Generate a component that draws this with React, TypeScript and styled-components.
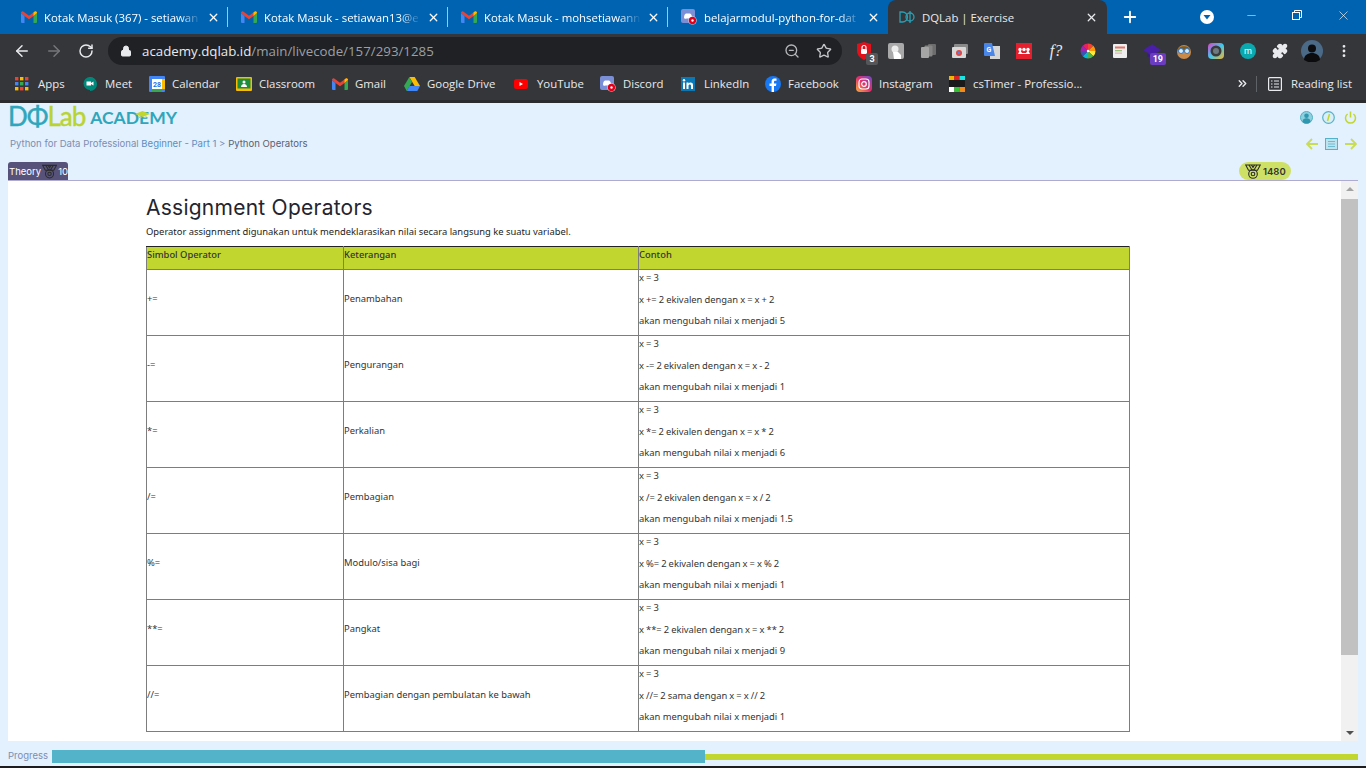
import React from 'react';
import styled, { createGlobalStyle } from 'styled-components';
import { Puzzle, Star, ZoomOut, Lock, ArrowLeft, ArrowRight, RotateCw, Plus, X, Minus, MoreVertical, ChevronsRight } from 'lucide-react';

const GlobalStyle = createGlobalStyle`
  html, body {
    margin: 0;
    padding: 0;
    width: 1366px;
    height: 768px;
    overflow: hidden;
    background: #1d1d1f;
  }
  * { box-sizing: border-box; }
`;

const GmailIcon = () => (
  <svg width="16" height="12" viewBox="0 0 16 12">
    <path d="M0 2v9a1 1 0 0 0 1 1h2.500V5z" fill="#4285f4" />
    <path d="M16 2v9a1 1 0 0 1-1 1h-2.500V5z" fill="#34a853" />
    <path d="M0 2l3.500 3L8 8.200 12.500 5 16 2a1.600 1.600 0 0 0-2.600-1.300L8 4.700 2.600.7A1.600 1.600 0 0 0 0 2z" fill="#ea4335" />
    <path d="M12.500 5V1.500l.9-.8A1.600 1.600 0 0 1 16 2z" fill="#fbbc04" />
  </svg>
);

const DiscordIcon = () => (
  <svg width="16" height="16" viewBox="0 0 16 16">
    <rect width="14" height="14" rx="2" fill="#7b8fd6" />
    <path d="M3 9c0-3 1-4 2-4.500h4c1 .5 2 1.500 2 4.500-1 1-2 1-2.500.5h-3C5 10 4 10 3 9z" fill="#fff" />
    <circle cx="11.500" cy="11.500" r="4" fill="#fff" />
    <circle cx="11.500" cy="11.500" r="3.700" fill="#e1001a" />
    <circle cx="11.500" cy="11.500" r="1.200" fill="#fff" />
  </svg>
);

const DqlabMark = () => (
  <svg width="16" height="12" viewBox="0 0 16 12" fill="none" stroke="#2a9fb3" strokeWidth="1.300">
    <path d="M1 1h2.500a5 5 0 0 1 0 10H1z" />
    <circle cx="11" cy="6" r="4" />
    <path d="M11 0v12" />
  </svg>
);

const MedalIcon = () => (
  <svg width="16" height="15" viewBox="0 0 16 15" fill="none" stroke="#2b2b2b" strokeWidth="1.100">
    <path d="M.7 1h14.600l-2.800 5.200h-9z" />
    <path d="M4 1l3 5M12 1L9 6M6.500 1L8 3.500 9.500 1" />
    <circle cx="8" cy="10" r="4.300" />
    <circle cx="8" cy="10" r="1.800" />
  </svg>
);

const AppsIcon = () => (
  <svg width="14" height="14" viewBox="0 0 14 14">
    {[0, 5, 10].map((y, r) =>
      [0, 5, 10].map((x, c) => (
        <rect key={`${r}${c}`} x={x} y={y} width="3.400" height="3.400" fill={['#ea4335', '#4285f4', '#fbbc04', '#34a853'][(r + c * 2) % 4]} />
      )),
    )}
  </svg>
);

const MeetIcon = () => (
  <svg width="16" height="16" viewBox="0 0 16 16">
    <path d="M8 1a7 7 0 0 1 0 14v-1.500A7 7 0 0 1 8 1z" fill="#00897b" />
    <circle cx="8" cy="7.500" r="6.500" fill="#00897b" />
    <rect x="4.500" y="5.500" width="4.500" height="4" fill="#fff" />
    <path d="M9 7l2.500-1.500v4L9 8z" fill="#fff" />
  </svg>
);

const CalendarIcon = () => (
  <svg width="16" height="16" viewBox="0 0 16 16">
    <rect width="16" height="16" rx="1" fill="#4285f4" />
    <rect x="3" y="3" width="10" height="10" fill="#fff" />
    <rect x="13" y="3" width="3" height="10" fill="#fbbc04" />
    <rect x="3" y="13" width="10" height="3" fill="#34a853" />
    <text x="8" y="11" fontSize="7" fontWeight="700" textAnchor="middle" fill="#1a73e8" fontFamily="Roboto, sans-serif">28</text>
  </svg>
);

const ClassroomIcon = () => (
  <svg width="16" height="14" viewBox="0 0 16 14">
    <rect width="16" height="14" rx="1" fill="#f9bb04" />
    <rect x="1.500" y="1.500" width="13" height="10" fill="#1e8e3e" />
    <circle cx="8" cy="5" r="1.500" fill="#fff" />
    <path d="M5 10c0-2 1.500-3 3-3s3 1 3 3z" fill="#fff" />
  </svg>
);

const DriveIcon = () => (
  <svg width="16" height="14" viewBox="0 0 16 14">
    <path d="M5.300 0h5.400L16 9h-5.300z" fill="#fbbc04" />
    <path d="M5.300 0L0 9l2.700 5L8 5z" fill="#34a853" />
    <path d="M2.700 14h10.600L16 9H5.400z" fill="#4285f4" />
  </svg>
);

const YoutubeIcon = () => (
  <svg width="14" height="10" viewBox="0 0 14 10">
    <rect width="14" height="10" rx="2.500" fill="#f00" />
    <path d="M5.500 3v4L9 5z" fill="#fff" />
  </svg>
);

const LinkedinIcon = () => (
  <svg width="14" height="14" viewBox="0 0 14 14">
    <rect width="14" height="14" fill="#0a78b5" />
    <rect x="2" y="5.500" width="2" height="6.500" fill="#fff" />
    <circle cx="3" cy="3.300" r="1.200" fill="#fff" />
    <path d="M5.500 5.500h2v1c1-1.500 4.500-1.500 4.500 1.500v4h-2V8.500c0-1.500-2.500-1.500-2.500 0V12h-2z" fill="#fff" />
  </svg>
);

const FacebookIcon = () => (
  <svg width="16" height="16" viewBox="0 0 16 16">
    <circle cx="8" cy="8" r="8" fill="#1877f2" />
    <path d="M9 16V10h2l.4-2.500H9V6c0-.8.4-1.300 1.400-1.300h1.100V2.500C10 2.300 6.600 2 6.600 5.700v1.800H4.500V10h2.100v6z" fill="#fff" />
  </svg>
);

const InstagramIcon = () => (
  <svg width="16" height="16" viewBox="0 0 16 16">
    <defs>
      <linearGradient id="ig" x1="0" y1="1" x2="1" y2="0">
        <stop offset="0" stopColor="#fdb03a" />
        <stop offset="0.5" stopColor="#e1306c" />
        <stop offset="1" stopColor="#6a4cd0" />
      </linearGradient>
    </defs>
    <rect width="16" height="16" rx="4" fill="url(#ig)" />
    <rect x="3" y="3" width="10" height="10" rx="3" fill="none" stroke="#fff" strokeWidth="1.200" />
    <circle cx="8" cy="8" r="2.300" fill="none" stroke="#fff" strokeWidth="1.200" />
  </svg>
);

const CsTimerIcon = () => (
  <svg width="16" height="16" viewBox="0 0 16 16">
    <rect width="5.400" height="4" fill="#f5b301" />
    <rect x="5.300" width="5.400" height="4" fill="#e02020" />
    <rect x="10.600" width="5.400" height="4" fill="#19e5e5" />
    <rect y="4" width="16" height="7" fill="#1a1a1a" />
    <rect y="11" width="5.400" height="5" fill="#fff" />
    <rect x="5.300" y="11" width="5.400" height="5" fill="#33c233" />
    <rect x="10.600" y="11" width="5.400" height="5" fill="#f28a1c" />
  </svg>
);

const ReadingIcon = () => (
  <svg width="14" height="14" viewBox="0 0 14 14" fill="none" stroke="#e8eaed" strokeWidth="1.200">
    <rect x=".6" y=".6" width="12.800" height="12.800" rx="1" />
    <path d="M3 4h1.500M6 4h5M3 7h1.500M6 7h5M3 10h1.500M6 10h5" />
  </svg>
);

const ExtShield = () => (
  <svg width="16" height="18" viewBox="0 0 16 18">
    <path d="M8 0l7 2v7c0 4-3 7-7 9-4-2-7-5-7-9V2z" fill="#e0111b" />
    <rect x="5" y="7" width="6" height="5" rx="1" fill="#fff" />
    <path d="M6 7V5.500a2 2 0 0 1 4 0V7" fill="none" stroke="#fff" strokeWidth="1.200" />
  </svg>
);

const ExtTouch = () => (
  <svg width="16" height="16" viewBox="0 0 16 16">
    <rect width="16" height="16" rx="2" fill="#a9a9a9" />
    <circle cx="7" cy="6" r="3.500" fill="#ececec" />
    <path d="M5 9h5l3 3v4H6z" fill="#fff" />
  </svg>
);

const ExtCopies = () => (
  <svg width="15" height="14" viewBox="0 0 15 14">
    <rect x="7" width="8" height="11" rx="1" fill="#6d6d6d" />
    <rect x="3.500" y="1.500" width="8" height="11" rx="1" fill="#858585" />
    <rect y="3" width="8" height="11" rx="1" fill="#a5a5a5" />
  </svg>
);

const ExtWindow = () => (
  <svg width="16" height="14" viewBox="0 0 16 14">
    <rect x="2" width="14" height="10" rx="1" fill="#8a8a8a" />
    <rect y="3" width="14" height="11" rx="1" fill="#d8d8d8" />
    <circle cx="7" cy="9" r="3" fill="#e8453c" />
    <circle cx="7" cy="9" r="1.300" fill="#4285f4" />
  </svg>
);

const ExtTranslate = () => (
  <svg width="16" height="16" viewBox="0 0 16 16">
    <rect x="6" y="3" width="10" height="13" fill="#d5d5d5" />
    <path d="M0 1a1 1 0 0 1 1-1h7l3 13H1a1 1 0 0 1-1-1z" fill="#4a86e8" />
    <text x="5" y="9" fontSize="7" fontWeight="700" textAnchor="middle" fill="#fff" fontFamily="Roboto, sans-serif">G</text>
  </svg>
);

const ExtMendeley = () => (
  <svg width="16" height="16" viewBox="0 0 16 16">
    <rect width="16" height="16" fill="#e5202e" />
    <circle cx="8" cy="6.500" r="1.700" fill="#fff" />
    <circle cx="4" cy="6.500" r="1.700" fill="#fff" />
    <circle cx="12" cy="6.500" r="1.700" fill="#fff" />
    <path d="M2 11l2-4 2 3h4l2-3 2 4z" fill="#fff" />
  </svg>
);

const ExtWheel = () => (
  <svg width="16" height="16" viewBox="0 0 16 16">
    {['#f44336', '#ff9800', '#ffeb3b', '#4caf50', '#00bcd4', '#3f51b5', '#9c27b0', '#e91e63'].map((c, i) => (
      <path key={c} d="M8 8L8 0.500A7.500 7.500 0 0 1 13.300 2.700z" fill={c} transform={`rotate(${i * 45} 8 8)`} />
    ))}
    <circle cx="8" cy="8" r="1.200" fill="#fff" />
  </svg>
);

const ExtNote = () => (
  <svg width="14" height="14" viewBox="0 0 14 14">
    <rect width="14" height="14" rx="1" fill="#eeeeee" />
    <rect x="2" y="2.500" width="10" height="2" fill="#e57368" />
    <rect x="2" y="6" width="7" height="1.300" fill="#93c47d" />
    <rect x="2" y="8.500" width="7" height="1.300" fill="#e6b8af" />
  </svg>
);

const ExtCap = () => (
  <svg width="18" height="14" viewBox="0 0 16 12">
    <path d="M8 0l8 5-8 5-8-5z" fill="#4a1fa8" />
    <path d="M4 8l4 3 4-3v3H4z" fill="#3a1a88" />
  </svg>
);

const ExtFace = () => (
  <svg width="16" height="16" viewBox="0 0 16 16">
    <circle cx="8" cy="9" r="7" fill="#c98a4a" />
    <path d="M2 7c0-5 12-5 12 0z" fill="#7a5a22" />
    <circle cx="5" cy="8" r="2.500" fill="#d9efff" stroke="#2a7ad0" />
    <circle cx="11" cy="8" r="2.500" fill="#d9efff" stroke="#2a7ad0" />
  </svg>
);

const ExtCamera = () => (
  <svg width="16" height="16" viewBox="0 0 16 16">
    <defs>
      <linearGradient id="cam" x1="0" y1="0" x2="1" y2="1">
        <stop offset="0" stopColor="#e23dc8" />
        <stop offset="0.5" stopColor="#41c7ea" />
        <stop offset="1" stopColor="#f7b32b" />
      </linearGradient>
    </defs>
    <rect width="16" height="16" rx="4" fill="url(#cam)" />
    <circle cx="8" cy="8" r="5.500" fill="#3a3a3a" />
    <circle cx="8" cy="8" r="3" fill="#6d7a80" />
  </svg>
);

const ExtM = () => (
  <svg width="16" height="16" viewBox="0 0 16 16">
    <circle cx="8" cy="8" r="8" fill="#0aa9b0" />
    <text x="8" y="11" fontSize="9" textAnchor="middle" fill="#fff" fontFamily="Roboto, sans-serif">m</text>
  </svg>
);

const Avatar = () => (
  <svg width="22" height="22" viewBox="0 0 22 22">
    <circle cx="11" cy="11" r="11" fill="#4a6a88" />
    <circle cx="11" cy="8.500" r="4" fill="#0c0c0e" />
    <path d="M3 20c0-5 4-7 8-7s8 2 8 7l-4 2H7z" fill="#0c0c0e" />
  </svg>
);

const ProfileDrop = () => (
  <svg width="14" height="14" viewBox="0 0 14 14">
    <circle cx="7" cy="7" r="7" fill="#fff" />
    <path d="M3.500 5h7L7 9.500z" fill="#0063b1" />
  </svg>
);

const RestoreIcon = () => (
  <svg width="10" height="10" viewBox="0 0 10 10" fill="none" stroke="#fff" strokeWidth="1">
    <rect x=".5" y="2.500" width="7" height="7" />
    <path d="M2.500 2.500V.5h7v7h-2" />
  </svg>
);

const UserIcon = () => (
  <svg width="13" height="13" viewBox="0 0 13 13">
    <circle cx="6.500" cy="6.500" r="6" fill="#8fd0de" stroke="#4fb0c6" />
    <circle cx="6.500" cy="4.800" r="2.300" fill="#2f98b0" />
    <path d="M2.500 11c0-3 2-3.700 4-3.700s4 .7 4 3.700a6 6 0 0 1-8 0z" fill="#2f98b0" />
  </svg>
);

const InfoIcon = () => (
  <svg width="13" height="13" viewBox="0 0 13 13" fill="none">
    <circle cx="6.500" cy="6.500" r="5.800" stroke="#53b3c8" strokeWidth="1.200" fill="#d9eef6" />
    <path d="M7.500 3L5.500 10" stroke="#c1d72f" strokeWidth="1.500" />
  </svg>
);

const PowerIcon = () => (
  <svg width="13" height="13" viewBox="0 0 13 13" fill="none" stroke="#c1d72f" strokeWidth="1.500">
    <path d="M3.600 3A5 5 0 1 0 9.400 3" />
    <path d="M6.500 .5v6" />
  </svg>
);

const NavArrow = ({ flip }: { flip?: boolean }) => (
  <svg width="12" height="12" viewBox="0 0 12 12" fill="none" stroke="#c9dc55" strokeWidth="1.800" style={flip ? { transform: 'scaleX(-1)' } : undefined}>
    <path d="M6 1L1 6l5 5M1 6h11" />
  </svg>
);

const OutlineIcon = () => (
  <svg width="13" height="12" viewBox="0 0 13 12">
    <rect x=".5" y=".5" width="12" height="11" fill="#bfe3ee" stroke="#53b3c8" />
    <path d="M3 3.500h7M3 6h7M3 8.500h7" stroke="#6fbcd0" />
  </svg>
);

const Cap = () => (
  <svg width="15" height="8" viewBox="0 0 15 8">
    <path d="M7.500 0L15 3 7.500 6 0 3z" fill="#c1d72f" />
    <path d="M3.500 5l4 2 4-2v2h-8z" fill="#c1d72f" />
  </svg>
);

const tabs = [
  { title: 'Kotak Masuk (367) - setiawan', icon: <GmailIcon /> },
  { title: 'Kotak Masuk - setiawan13@e', icon: <GmailIcon /> },
  { title: 'Kotak Masuk - mohsetiawann', icon: <GmailIcon /> },
  { title: 'belajarmodul-python-for-dat', icon: <DiscordIcon /> },
];

const bookmarks = [
  { label: 'Apps', icon: <AppsIcon />, w: 67 },
  { label: 'Meet', icon: <MeetIcon />, w: 67 },
  { label: 'Calendar', icon: <CalendarIcon />, w: 87 },
  { label: 'Classroom', icon: <ClassroomIcon />, w: 96 },
  { label: 'Gmail', icon: <GmailIcon />, w: 72 },
  { label: 'Google Drive', icon: <DriveIcon />, w: 110 },
  { label: 'YouTube', icon: <YoutubeIcon />, w: 86 },
  { label: 'Discord', icon: <DiscordIcon />, w: 81 },
  { label: 'LinkedIn', icon: <LinkedinIcon />, w: 84 },
  { label: 'Facebook', icon: <FacebookIcon />, w: 91 },
  { label: 'Instagram', icon: <InstagramIcon />, w: 93 },
];

const rows = [
  { op: '+=', desc: 'Penambahan', assign: 'x += 2 ekivalen dengan x = x + 2', result: '5' },
  { op: '-=', desc: 'Pengurangan', assign: 'x -= 2 ekivalen dengan x = x - 2', result: '1' },
  { op: '*=', desc: 'Perkalian', assign: 'x *= 2 ekivalen dengan x = x * 2', result: '6' },
  { op: '/=', desc: 'Pembagian', assign: 'x /= 2 ekivalen dengan x = x / 2', result: '1.5' },
  { op: '%=', desc: 'Modulo/sisa bagi', assign: 'x %= 2 ekivalen dengan x = x % 2', result: '1' },
  { op: '**=', desc: 'Pangkat', assign: 'x **= 2 ekivalen dengan x = x ** 2', result: '9' },
  { op: '//=', desc: 'Pembagian dengan pembulatan ke bawah', assign: 'x //= 2 sama dengan x = x // 2', result: '1' },
];

function App(): React.ReactElement {
  const extensions = [
    <ExtShield key="a" />, <ExtTouch key="b" />, <ExtCopies key="c" />, <ExtWindow key="d" />, <ExtTranslate key="e" />,
    <ExtMendeley key="f" />, <FxText key="g">f?</FxText>, <ExtWheel key="h" />, <ExtNote key="i" />, <ExtCap key="j" />,
    <ExtFace key="k" />, <ExtCamera key="l" />, <ExtM key="m" />, <Puzzle key="n" size={16} color="#e8eaed" fill="#e8eaed" />,
    <Avatar key="o" />,
  ];

  return (
    <>
      <GlobalStyle />
      <Screen>
        <TabStrip>
          {tabs.map((tab, i) => (
            <Tab key={tab.title} $last={i === tabs.length - 1}>
              <TabIcon>{tab.icon}</TabIcon>
              <TabTitle $fade>{tab.title}</TabTitle>
              <X size={13} color="#fff" strokeWidth={2.4} />
            </Tab>
          ))}
          <ActiveTab>
            <TabIcon>
              <DqlabMark />
            </TabIcon>
            <TabTitle>DQLab | Exercise</TabTitle>
            <X size={13} color="#e8eaed" strokeWidth={2.4} />
          </ActiveTab>
          <NewTab>
            <Plus size={18} color="#fff" strokeWidth={2.4} />
          </NewTab>
          <WindowControls>
            <ProfileSlot>
              <ProfileDrop />
            </ProfileSlot>
            <WindowButton>
              <Minus size={13} color="#fff" strokeWidth={1} />
            </WindowButton>
            <WindowButton>
              <RestoreIcon />
            </WindowButton>
            <WindowButton>
              <X size={15} color="#fff" strokeWidth={1} />
            </WindowButton>
          </WindowControls>
        </TabStrip>

        <Toolbar>
          <NavButton>
            <ArrowLeft size={18} color="#e8eaed" strokeWidth={2} />
          </NavButton>
          <NavButton>
            <ArrowRight size={18} color="#75777a" strokeWidth={2} />
          </NavButton>
          <NavButton>
            <RotateCw size={16} color="#e8eaed" strokeWidth={2.2} />
          </NavButton>
          <Omnibox>
            <Lock size={12} color="#e8eaed" fill="#e8eaed" />
            <Url>
              academy.dqlab.id<UrlPath>/main/livecode/157/293/1285</UrlPath>
            </Url>
            <OmniIcon>
              <ZoomOut size={16} color="#b5b7ba" />
            </OmniIcon>
            <OmniIcon>
              <Star size={16} color="#c4c6c9" strokeWidth={2} />
            </OmniIcon>
          </Omnibox>
          <Extensions>
            {extensions.map((ext, i) => (
              <ExtSlot key={i}>
                {ext}
                {i === 0 && <ExtBadge $bg="#55565a">3</ExtBadge>}
                {i === 9 && <ExtBadge $bg="#6a3cc0">19</ExtBadge>}
              </ExtSlot>
            ))}
            <ExtSlot>
              <MoreVertical size={16} color="#e8eaed" strokeWidth={2.2} />
            </ExtSlot>
          </Extensions>
        </Toolbar>

        <BookmarkBar>
          {bookmarks.map((b) => (
            <Bookmark key={b.label} $w={b.w}>
              <BookmarkIcon>{b.icon}</BookmarkIcon>
              {b.label}
            </Bookmark>
          ))}
          <Bookmark $w={200}>
            <BookmarkIcon>
              <CsTimerIcon />
            </BookmarkIcon>
            <CsLabel>csTimer - Professio...</CsLabel>
          </Bookmark>
          <BookmarkEnd>
            <ChevronsRight size={13} color="#e8eaed" strokeWidth={2.6} />
            <BookmarkDivider />
            <Bookmark $w={92}>
              <BookmarkIcon>
                <ReadingIcon />
              </BookmarkIcon>
              Reading list
            </Bookmark>
          </BookmarkEnd>
        </BookmarkBar>
        <ChromeEdge />

        <Page>
          <PageHeader>
            <div>
              <Logo>
                <LogoTeal>DΦ</LogoTeal>
                <LogoLime>Lab</LogoLime>
                <LogoAcademy>
                  ACADEMY
                  <LogoCap>
                    <Cap />
                  </LogoCap>
                </LogoAcademy>
              </Logo>
              <Breadcrumb>
                Python for Data Professional <BreadcrumbLink>Beginner - Part 1</BreadcrumbLink> &gt;{' '}
                <BreadcrumbCurrent>Python Operators</BreadcrumbCurrent>
              </Breadcrumb>
            </div>
            <HeaderActions>
              <ActionRow>
                <UserIcon />
                <InfoIcon />
                <PowerIcon />
              </ActionRow>
              <LessonNav>
                <NavArrow />
                <OutlineIcon />
                <NavArrow flip />
              </LessonNav>
            </HeaderActions>
          </PageHeader>

          <TagRow>
            <TheoryTag>
              Theory
              <MedalIcon />
              10
            </TheoryTag>
            <ScorePill>
              <MedalIcon />
              1480
            </ScorePill>
          </TagRow>

          <Panel>
            <Content>
              <Title>Assignment Operators</Title>
              <Intro>Operator assignment digunakan untuk mendeklarasikan nilai secara langsung ke suatu variabel.</Intro>
              <OperatorTable>
                <colgroup>
                  <col width="197" />
                  <col width="295" />
                  <col width="491" />
                </colgroup>
                <thead>
                  <tr>
                    <HeadCell>Simbol Operator</HeadCell>
                    <HeadCell>Keterangan</HeadCell>
                    <HeadCell>Contoh</HeadCell>
                  </tr>
                </thead>
                <tbody>
                  {rows.map((row) => (
                    <tr key={row.op}>
                      <Cell>{row.op}</Cell>
                      <Cell>{row.desc}</Cell>
                      <ExampleCell>
                        <ExampleLine $tight>x = 3</ExampleLine>
                        <ExampleLine $tight>{row.assign}</ExampleLine>
                        <ExampleLine>akan mengubah nilai x menjadi {row.result}</ExampleLine>
                      </ExampleCell>
                    </tr>
                  ))}
                </tbody>
              </OperatorTable>
            </Content>
            <Scrollbar>
              <ScrollArrow />
              <ScrollThumb />
              <ScrollArrow $down />
            </Scrollbar>
          </Panel>

          <ProgressRow>
            <ProgressLabel>Progress</ProgressLabel>
            <ProgressTrack>
              <ProgressFill />
            </ProgressTrack>
          </ProgressRow>
        </Page>
      </Screen>
    </>
  );
}

const Screen = styled.div`
  display: flex;
  flex-direction: column;
  width: 1366px;
  height: 768px;
  overflow: hidden;
  background: #1d1d1f;
  font-family: 'Open Sans', sans-serif;
`;

const TabStrip = styled.div`
  display: flex;
  align-items: stretch;
  height: 34px;
  padding-left: 8px;
  background: #0063b1;
`;

const Tab = styled.div<{ $last?: boolean }>`
  display: flex;
  align-items: center;
  width: 220px;
  height: 34px;
  padding: 0 8px 0 13px;
  color: #fff;
  background-image: ${(p) => (p.$last ? 'none' : 'linear-gradient(#a5c6e0, #a5c6e0)')};
  background-size: 1px 20px;
  background-position: right center;
  background-repeat: no-repeat;
`;

const ActiveTab = styled(Tab)`
  width: 219px;
  background: #35363a;
  border-radius: 8px 8px 0 0;
  padding-left: 11px;
  padding-right: 9px;
  color: #e8eaed;
`;

const TabIcon = styled.span`
  display: flex;
  align-items: center;
  width: 23px;
  flex: none;
`;

const TabTitle = styled.span<{ $fade?: boolean }>`
  flex: 1;
  margin-right: 6px;
  white-space: nowrap;
  font-size: 11.4px;
  ${(p) =>
    p.$fade &&
    `-webkit-mask-image: linear-gradient(to right, #000 86%, transparent 100%);
     mask-image: linear-gradient(to right, #000 86%, transparent 100%);`}
`;

const NewTab = styled.div`
  display: flex;
  align-items: center;
  justify-content: center;
  width: 46px;
`;

const WindowControls = styled.div`
  display: flex;
  align-items: flex-start;
  margin-left: auto;
`;

const ProfileSlot = styled.div`
  display: flex;
  align-items: center;
  justify-content: center;
  width: 42px;
  height: 34px;
`;

const WindowButton = styled.div`
  display: flex;
  align-items: center;
  justify-content: center;
  width: 46px;
  height: 30px;
`;

const Toolbar = styled.div`
  display: flex;
  align-items: center;
  height: 33px;
  padding-left: 6px;
  background: #35363a;
`;

const NavButton = styled.div`
  display: flex;
  align-items: center;
  justify-content: center;
  width: 32px;
`;

const Omnibox = styled.div`
  display: flex;
  align-items: center;
  width: 734px;
  height: 28px;
  margin-left: 6px;
  padding: 0 2px 0 12px;
  border-radius: 14px;
  background: #202124;
`;

const Url = styled.div`
  flex: 1;
  margin-left: 10px;
  color: #e8eaed;
  font-size: 13.3px;
  white-space: nowrap;
`;

const UrlPath = styled.span`
  color: #9aa0a6;
`;

const OmniIcon = styled.span`
  display: flex;
  align-items: center;
  justify-content: center;
  width: 32px;
`;

const Extensions = styled.div`
  display: flex;
  align-items: center;
  margin-left: 6px;
`;

const ExtSlot = styled.div`
  position: relative;
  display: flex;
  align-items: center;
  justify-content: center;
  width: 32px;
  height: 28px;
`;

const ExtBadge = styled.span<{ $bg: string }>`
  position: absolute;
  right: 2px;
  bottom: 0;
  min-width: 12px;
  height: 12px;
  padding: 0 3px;
  border-radius: 2px;
  background: ${(p) => p.$bg};
  color: #fff;
  font-size: 9px;
  font-weight: 700;
  line-height: 12px;
  text-align: center;
  font-family: 'Roboto', sans-serif;
`;

const FxText = styled.span`
  color: #e8eaed;
  font-family: 'Liberation Serif', serif;
  font-style: italic;
  font-size: 16px;
`;

const BookmarkBar = styled.div`
  display: flex;
  align-items: center;
  height: 33px;
  padding-left: 15px;
  background: #35363a;
`;

const Bookmark = styled.div<{ $w: number }>`
  display: flex;
  align-items: center;
  flex: none;
  width: ${(p) => p.$w}px;
  color: #e8eaed;
  font-size: 11.4px;
  white-space: nowrap;
`;

const BookmarkIcon = styled.span`
  display: flex;
  align-items: center;
  justify-content: flex-start;
  width: 23px;
`;

const CsLabel = styled.span`
  margin-left: 1px;
`;

const BookmarkEnd = styled.div`
  display: flex;
  align-items: center;
  margin-left: auto;
  padding-right: 6px;
`;

const BookmarkDivider = styled.span`
  width: 1px;
  height: 16px;
  margin: 0 11px 0 7px;
  background: #5f6368;
`;

const ChromeEdge = styled.div`
  height: 3px;
  background: #2a2b2e;
`;

const Page = styled.main`
  display: flex;
  flex-direction: column;
  height: 663px;
  padding: 0 8px;
  background: #e3f0fe;
`;

const PageHeader = styled.header`
  display: flex;
  justify-content: space-between;
  height: 59px;
`;

const Logo = styled.div`
  display: flex;
  align-items: flex-end;
  height: 26px;
  font-family: 'Lato', sans-serif;
  font-size: 26px;
  line-height: 26px;
  letter-spacing: -1px;
`;

const LogoTeal = styled.span`
  color: #2fa6bb;
  -webkit-text-stroke: 0.4px #2fa6bb;
`;

const LogoLime = styled.span`
  color: #b9d430;
  -webkit-text-stroke: 0.4px #b9d430;
`;

const LogoAcademy = styled.span`
  position: relative;
  margin-left: 5px;
  color: #2fa6bb;
  font-size: 17.5px;
  font-weight: 700;
  line-height: 22px;
  letter-spacing: 0;
`;

const LogoCap = styled.span`
  position: absolute;
  top: -5px;
  right: 27px;
`;

const Breadcrumb = styled.div`
  margin: 9px 0 0 2px;
  color: #7d8db0;
  font-family: 'Inter', sans-serif;
  font-size: 9.55px;
  white-space: nowrap;
`;

const BreadcrumbLink = styled.span`
  color: #5a8fc0;
`;

const BreadcrumbCurrent = styled.span`
  color: #5a5f73;
`;

const HeaderActions = styled.div`
  display: flex;
  flex-direction: column;
  align-items: flex-end;
  padding-top: 8px;
`;

const ActionRow = styled.div`
  display: flex;
  gap: 9px;
  margin-right: 1px;
`;

const LessonNav = styled.div`
  display: flex;
  align-items: center;
  gap: 7px;
  margin: 14px 1px 0 0;
`;

const TagRow = styled.div`
  display: flex;
  justify-content: space-between;
  height: 19px;
  padding-right: 67px;
  border-bottom: 1px solid #aeaad0;
`;

const TheoryTag = styled.div`
  display: flex;
  align-items: center;
  gap: 1px;
  width: 60px;
  height: 18px;
  padding-left: 1px;
  border-radius: 3px 3px 0 0;
  background: #56527a;
  color: #fff;
  font-family: 'Inter', sans-serif;
  font-size: 9.5px;
  white-space: nowrap;
`;

const ScorePill = styled.div`
  display: flex;
  align-items: center;
  gap: 2px;
  width: 52px;
  height: 18px;
  padding-left: 6px;
  border-radius: 9px;
  background: #cfe066;
  color: #333;
  font-family: 'Inter', sans-serif;
  font-size: 9.5px;
  font-weight: 600;
`;

const Panel = styled.section`
  display: flex;
  height: 560px;
  background: #fff;
`;

const Content = styled.div`
  flex: 1;
  padding: 13px 0 0 138px;
  overflow: hidden;
`;

const Title = styled.h1`
  margin: 0;
  color: #24242e;
  font-family: 'Inter', sans-serif;
  font-size: 21px;
  font-weight: 400;
  line-height: 28px;
  letter-spacing: 0.25px;
`;

const Intro = styled.p`
  margin: 2px 0 0;
  color: #222;
  font-family: 'Noto Sans', sans-serif;
  font-size: 9.4px;
  line-height: 16px;
`;

const OperatorTable = styled.table`
  width: 983px;
  margin-top: 6px;
  table-layout: fixed;
  border-collapse: collapse;
  border: 1px solid #222;
  color: #333;
  font-family: 'Noto Sans', sans-serif;
  font-size: 9.4px;
`;

const HeadCell = styled.th`
  height: 23px;
  padding: 0 0 7px 0;
  border: 1px solid #7d7d7d;
  border-top-color: #222;
  background: #c1d72f;
  color: #333;
  font-weight: 500;
  text-align: left;
  line-height: 15px;
`;

const Cell = styled.td`
  height: 66px;
  padding: 0 0 9px;
  border: 1px solid #7d7d7d;
  vertical-align: middle;
  line-height: 15px;
`;

const ExampleCell = styled(Cell)`
  padding: 0;
  vertical-align: top;
`;

const ExampleLine = styled.div<{ $tight?: boolean }>`
  height: 21.5px;
  line-height: 15px;
  word-spacing: ${(p) => (p.$tight ? '-0.4px' : '0')};
`;

const Scrollbar = styled.div`
  display: flex;
  flex-direction: column;
  width: 17px;
  background: #f1f1f1;
`;

const ScrollArrow = styled.div<{ $down?: boolean }>`
  width: 0;
  height: 0;
  margin: ${(p) => (p.$down ? 'auto auto 6px' : '6px auto 5px')};
  border-left: 4px solid transparent;
  border-right: 4px solid transparent;
  ${(p) => (p.$down ? 'border-top: 4px solid #505050;' : 'border-bottom: 4px solid #a3a3a3;')}
`;

const ScrollThumb = styled.div`
  height: 456px;
  margin-top: 3px;
  background: #c1c1c1;
`;

const ProgressRow = styled.div`
  display: flex;
  align-items: center;
  gap: 2px;
  height: 13px;
  margin-top: 9px;
`;

const ProgressLabel = styled.span`
  width: 42px;
  padding-bottom: 3px;
  color: #7d8db0;
  font-family: 'Inter', sans-serif;
  font-size: 9.5px;
`;

const ProgressTrack = styled.div`
  display: flex;
  align-items: center;
  flex: 1;
  height: 6px;
  background: #c1d72f;
`;

const ProgressFill = styled.div`
  flex: none;
  width: 653px;
  height: 13px;
  background: #53b3c8;
`;

export default App;
